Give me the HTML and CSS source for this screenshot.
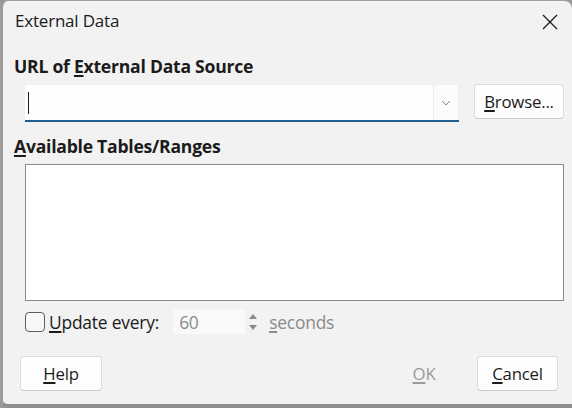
FILE: index.html
```html
<!DOCTYPE html>
<html>
<head>
<meta charset="utf-8">
<link rel="stylesheet" href="styles.css">
</head>
<body>
<div class="window">
  <div class="titlebar">
    <span class="title">External Data</span>
    <span class="close">
      <svg width="16" height="16" viewBox="0 0 16 16"><path d="M1 1 L15 15 M15 1 L1 15" stroke="#1b1b1b" stroke-width="1.3" fill="none"/></svg>
    </span>
  </div>
  <div class="content">
    <div class="heading">URL of <u>E</u>xternal Data Source</div>
    <div class="url-row">
      <div class="combo">
        <div class="combo-field"><span class="caret"></span></div>
        <div class="combo-btn">
          <svg width="10" height="6" viewBox="0 0 10 6"><path d="M1 1 L5 5 L9 1" stroke="#8a8a8a" stroke-width="1" fill="none"/></svg>
        </div>
      </div>
      <button class="btn browse"><u>B</u>rowse...</button>
    </div>
    <div class="heading heading2"><u>A</u>vailable Tables/Ranges</div>
    <div class="listbox"></div>
    <div class="update-row">
      <span class="checkbox"></span>
      <span class="label"><u>U</u>pdate every:</span>
      <span class="spin-field">60</span>
      <span class="spin-arrows">
        <svg width="10" height="20" viewBox="0 0 10 20"><path d="M1 7 L5 2 L9 7 Z" fill="#8a8a8a"/><path d="M1 13 L5 18 L9 13 Z" fill="#8a8a8a"/></svg>
      </span>
      <span class="seconds"><u>s</u>econds</span>
    </div>
    <div class="button-row">
      <button class="btn help"><u>H</u>elp</button>
      <div class="spacer"></div>
      <button class="btn ok" disabled><u>O</u>K</button>
      <button class="btn cancel"><u>C</u>ancel</button>
    </div>
  </div>
</div>
</body>
</html>
```

FILE: styles.css
```css
html, body {
  margin: 0;
  padding: 0;
  width: 572px;
  height: 408px;
  overflow: hidden;
  background: #9a9a9a;
}
* { box-sizing: border-box; }
.window {
  width: 572px;
  height: 408px;
  background: #f2f2f2;
  border-left: 3px solid #9c9c9c;
  border-top: 1px solid #a0a0a0;
  border-bottom: 4px solid #8e8e8e;
  border-radius: 8px 8px 0 8px;
  font-family: "Open Sans", "Noto Sans", sans-serif;
  color: #1b1b1b;
  display: flex;
  flex-direction: column;
}
.titlebar {
  height: 41px;
  display: flex;
  align-items: center;
  justify-content: space-between;
  padding: 0 14px 2px 12px;
}
.title {
  font-size: 17px;
  letter-spacing: -0.2px;
}
.close { display: flex; margin-top: 2px; }
.content {
  padding: 0 8px 0 11px;
  display: flex;
  flex-direction: column;
  flex: 1;
}
.heading {
  font-weight: 700;
  font-size: 17.6px;
  letter-spacing: -0.25px;
  height: 22px;
  line-height: 22px;
  margin-top: 13px;
}
.heading2 { margin-top: 13px; }
u { text-decoration-thickness: 2px; text-underline-offset: 2px; }
.url-row {
  display: flex;
  align-items: flex-start;
  margin-top: 8px;
  padding-left: 11px;
}
.combo {
  width: 434px;
  height: 37px;
  display: flex;
  background: #fdfdfd;
  border-bottom: 2px solid #1f5e8e;
}
.combo-field {
  flex: 1;
  display: flex;
  align-items: center;
  padding-left: 3px;
}
.caret {
  width: 1px;
  height: 22px;
  background: #1b1b1b;
}
.combo-btn {
  width: 26px;
  border-left: 1px solid #ececec;
  border-right: 1px solid #ececec;
  display: flex;
  align-items: center;
  justify-content: center;
  background: #fbfbfb;
}
.btn {
  font-family: "Open Sans", "Noto Sans", sans-serif;
  font-size: 16.8px;
  letter-spacing: -0.2px;
  color: #1b1b1b;
  background: #fdfdfd;
  border: 1px solid #dcdcdc;
  border-bottom-color: #c8c8c8;
  border-radius: 4px;
  padding: 0;
  height: 35px;
}
.browse {
  width: 90px;
  margin-left: 15px;
  margin-top: -1px;
}
.listbox {
  margin: 7px 0 0 11px;
  height: 137px;
  background: #ffffff;
  border: 1px solid #8a8a8a;
}
.update-row {
  display: flex;
  align-items: center;
  height: 22px;
  margin-top: 10px;
  padding-left: 11px;
  font-size: 17.4px;
  letter-spacing: -0.2px;
}
.checkbox {
  width: 20px;
  height: 20px;
  border: 1px solid #5e5e5e;
  border-radius: 4px;
  background: #f7f7f7;
}
.label { margin-left: 4px; }
.spin-field {
  margin-left: 14px;
  width: 72px;
  height: 24px;
  line-height: 24px;
  padding-left: 6px;
  background: #f9f9f9;
  color: #8a8a8a;
}
.spin-arrows { display: flex; margin-left: 3px; }
.seconds { margin-left: 11px; color: #8a8a8a; }
.button-row {
  display: flex;
  align-items: center;
  margin-top: 23px;
  padding-left: 6px;
}
.help { width: 82px; }
.spacer { flex: 1; }
.ok {
  width: 78px;
  background: transparent;
  border-color: transparent;
  color: #9a9a9a;
}
.cancel { width: 81px; margin-left: 14px; margin-right: 6px; }
```
